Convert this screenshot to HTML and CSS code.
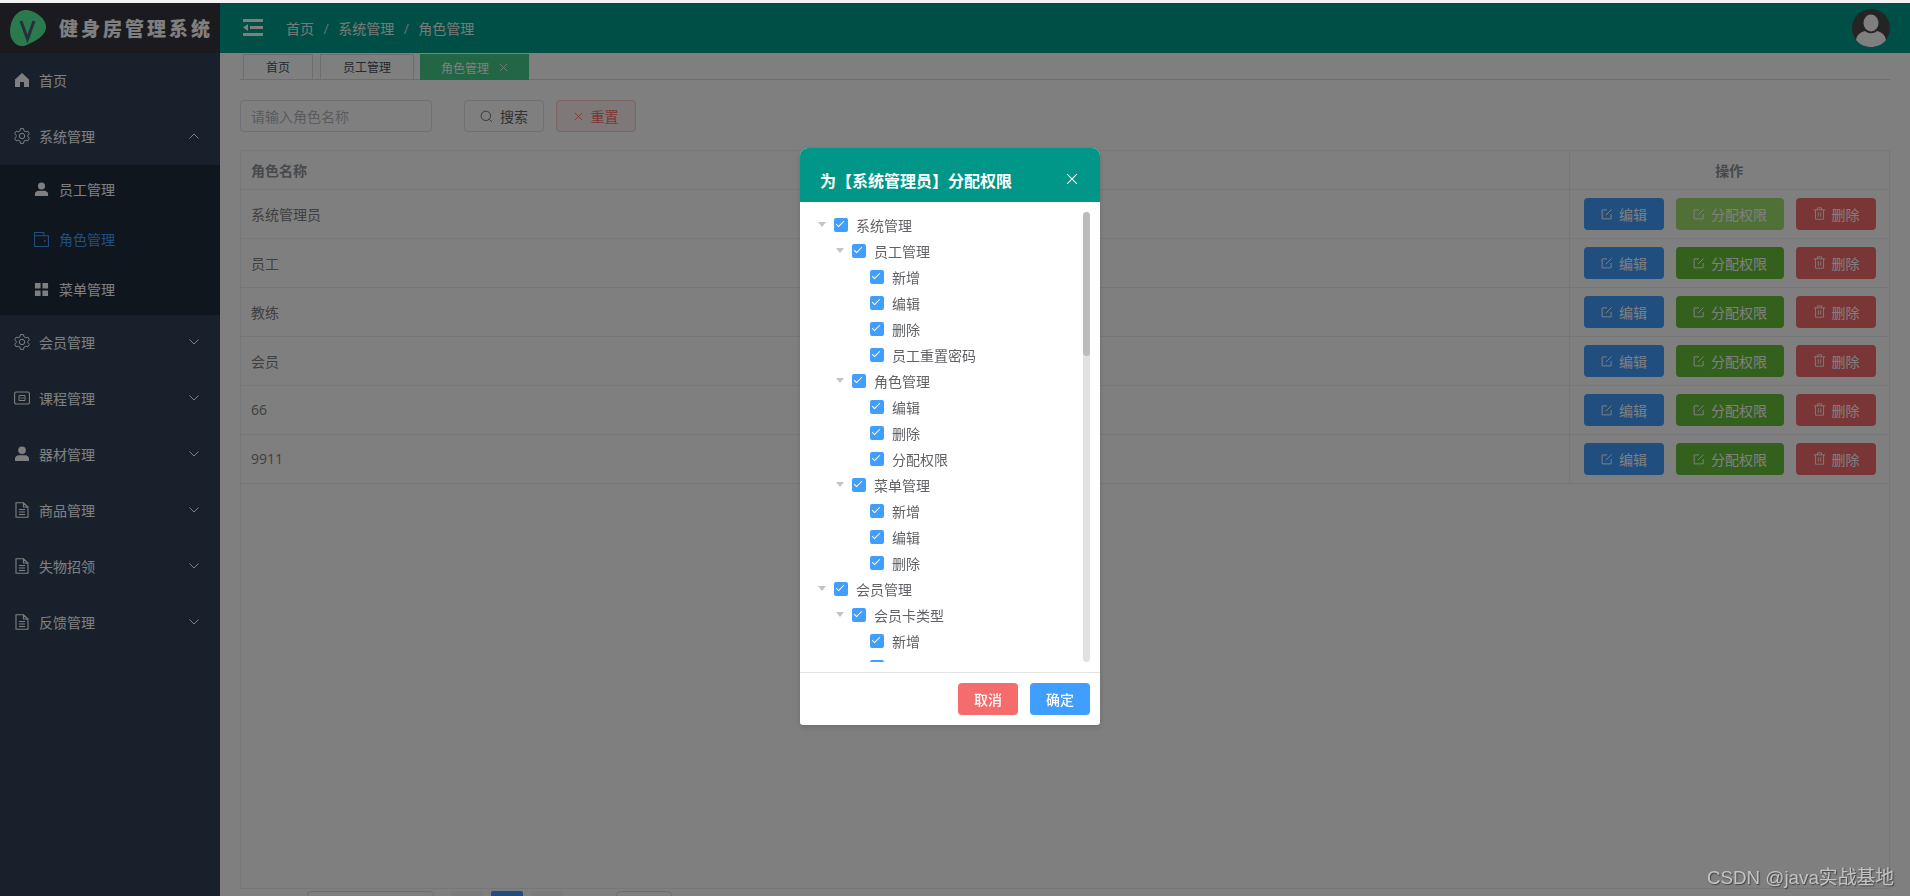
FILE: index.html
```html
<!DOCTYPE html>
<html lang="zh-CN">
<head>
    <meta charset="UTF-8">
    <meta name="viewport" content="width=device-width, initial-scale=1.0">
    <title>角色管理 - 健身房管理系统</title>
    <link rel="stylesheet" href="styles.css">
</head>
<body>
    <svg class="icon-defs" width="0" height="0">
        <symbol id="i-home" viewBox="0 0 16 16"><path d="M8 1 15 7.500V15H10V10H6V15H1V7.500Z" fill="currentColor"/></symbol>
        <symbol id="i-gear" viewBox="0 0 16 16"><path d="M6.500 .6H9.500L10 2.800 11.800 3.800 13.900 3.200 15.400 5.800 13.800 7.400V8.600L15.400 10.200 13.900 12.800 11.800 12.200 10 13.200 9.500 15.400H6.500L6 13.200 4.200 12.200 2.100 12.800 .6 10.200 2.200 8.600V7.400L.6 5.800 2.100 3.200 4.200 3.800 6 2.800Z" fill="none" stroke="currentColor" stroke-linejoin="round"/><circle cx="8" cy="8" r="2.700" fill="none" stroke="currentColor"/></symbol>
        <symbol id="i-user" viewBox="0 0 16 16"><circle cx="8" cy="4.200" r="3.800" fill="currentColor"/><path d="M1 15V12.500C1 10.500 3 9.400 5 9.200H11C13 9.400 15 10.500 15 12.500V15Z" fill="currentColor"/></symbol>
        <symbol id="i-wallet" viewBox="0 0 16 16"><path d="M.6 15.400V.6H10.500V4H15.400V15.400ZM.6 4H10.500" fill="none" stroke="currentColor" stroke-width="1.100"/><circle cx="11.500" cy="9.500" r="1" fill="currentColor"/></symbol>
        <symbol id="i-grid" viewBox="0 0 16 16"><path d="M1 1H7V7H1ZM9 1H15V7H9ZM1 9H7V15H1ZM9 9H15V15H9Z" fill="currentColor"/></symbol>
        <symbol id="i-film" viewBox="0 0 16 16"><rect x=".6" y="2" width="14.800" height="12" rx="1.500" fill="none" stroke="currentColor" stroke-width="1.100"/><path d="M5 5.500V10.500M11 5.500V10.500M5 5.500H11M5 10.500H11M7 7.200V8.800M9 7.200V8.800" fill="none" stroke="currentColor"/></symbol>
        <symbol id="i-doc" viewBox="0 0 16 16"><path d="M2 .8H9.500L14 5V15.200H2ZM9.500 .8V5H14M5 7.500H11M5 10H11M5 12.500H11" fill="none" stroke="currentColor" stroke-width="1.100"/></symbol>
        <symbol id="i-edit" viewBox="0 0 16 16"><path d="M13.500 8V14.500H1.500V2.500H8M6.500 9.500 14 2" fill="none" stroke="currentColor" stroke-width="1.300"/></symbol>
        <symbol id="i-trash" viewBox="0 0 16 16"><path d="M1 3.500H15M3 3.500V15H13V3.500M5.500 3.500V1H10.500V3.500M6.500 6.500V12M9.500 6.500V12" fill="none" stroke="currentColor" stroke-width="1.100"/></symbol>
        <symbol id="i-search" viewBox="0 0 16 16"><circle cx="7.200" cy="7.200" r="5.800" fill="none" stroke="currentColor" stroke-width="1.100"/><path d="M11.400 11.400 14.600 14.600" stroke="currentColor" stroke-width="1.100"/></symbol>
        <symbol id="i-close" viewBox="0 0 16 16"><path d="M1.500 1.500 14.500 14.500M14.500 1.500 1.500 14.500" stroke="currentColor" stroke-width="1.500"/></symbol>
        <symbol id="i-down" viewBox="0 0 10 6"><path d="M.5 .5 5 5 9.500 .5" fill="none" stroke="currentColor"/></symbol>
        <symbol id="i-up" viewBox="0 0 10 6"><path d="M.5 5.500 5 1 9.500 5.500" fill="none" stroke="currentColor"/></symbol>
    </svg>

    <div class="top-strip"></div>

    <div class="app">
        <aside class="sidebar">
            <div class="logo">
                <svg class="logo-mark" viewBox="0 0 36 36"><path d="M17 0C26 1 36 9 36 17 36 26 24 32 14 36 6 37 0 30 0 21 0 10 7-1 17 0Z" fill="#54f49c"/><path d="M11 11 17.500 29 24 11" fill="none" stroke="#4a6078" stroke-width="3"/></svg>
                <span class="logo-title">健身房管理系统</span>
            </div>
            <nav class="menu">
                <a class="menu-item"><svg class="menu-icon"><use href="#i-home"/></svg>首页</a>
                <a class="menu-item"><svg class="menu-icon"><use href="#i-gear"/></svg>系统管理<svg class="menu-arrow"><use href="#i-up"/></svg></a>
                <div class="submenu">
                    <a class="sub-item"><svg class="menu-icon"><use href="#i-user"/></svg>员工管理</a>
                    <a class="sub-item active"><svg class="menu-icon"><use href="#i-wallet"/></svg>角色管理</a>
                    <a class="sub-item"><svg class="menu-icon"><use href="#i-grid"/></svg>菜单管理</a>
                </div>
                <a class="menu-item"><svg class="menu-icon"><use href="#i-gear"/></svg>会员管理<svg class="menu-arrow"><use href="#i-down"/></svg></a>
                <a class="menu-item"><svg class="menu-icon"><use href="#i-film"/></svg>课程管理<svg class="menu-arrow"><use href="#i-down"/></svg></a>
                <a class="menu-item"><svg class="menu-icon"><use href="#i-user"/></svg>器材管理<svg class="menu-arrow"><use href="#i-down"/></svg></a>
                <a class="menu-item"><svg class="menu-icon"><use href="#i-doc"/></svg>商品管理<svg class="menu-arrow"><use href="#i-down"/></svg></a>
                <a class="menu-item"><svg class="menu-icon"><use href="#i-doc"/></svg>失物招领<svg class="menu-arrow"><use href="#i-down"/></svg></a>
                <a class="menu-item"><svg class="menu-icon"><use href="#i-doc"/></svg>反馈管理<svg class="menu-arrow"><use href="#i-down"/></svg></a>
            </nav>
        </aside>

        <div class="main">
            <header class="topbar">
                <svg class="hamburger" viewBox="0 0 20 17"><path d="M0 0H20V3H0ZM7 7H20V10H7ZM0 14H20V17H0ZM5 5V12L0 8.500Z" fill="currentColor"/></svg>
                <div class="breadcrumb">
                    <span>首页</span><i>/</i><span>系统管理</span><i>/</i><span>角色管理</span>
                </div>
                <svg class="avatar" viewBox="0 0 38 38"><circle cx="19" cy="19" r="19" fill="#484848"/><ellipse cx="19" cy="14" rx="7.500" ry="8.500" fill="#fff"/><path d="M4 31C5 25 9 23 13 22 16 25 22 25 25 22 29 23 33 25 34 31 30 36 24 38 19 38 14 38 8 36 4 31Z" fill="#fff"/></svg>
            </header>

            <div class="tabs">
                <span class="tab">首页</span>
                <span class="tab">员工管理</span>
                <span class="tab tab-active">角色管理<svg class="tab-close"><use href="#i-close"/></svg></span>
            </div>

            <div class="toolbar">
                <input class="search-input" type="text" placeholder="请输入角色名称">
                <button class="btn btn-plain"><svg class="btn-icon"><use href="#i-search"/></svg>搜索</button>
                <button class="btn btn-reset"><svg class="btn-icon"><use href="#i-close"/></svg>重置</button>
            </div>

            <div class="table-wrap">
                <table class="role-table">
                    <thead>
                        <tr><th>角色名称</th><th class="col-ops">操作</th></tr>
                    </thead>
                    <tbody>
                        <tr>
                            <td>系统管理员</td>
                            <td class="col-ops"><div class="ops">
                                <button class="btn btn-blue"><svg class="btn-icon"><use href="#i-edit"/></svg>编辑</button>
                                <button class="btn btn-green btn-hover"><svg class="btn-icon"><use href="#i-edit"/></svg>分配权限</button>
                                <button class="btn btn-red"><svg class="btn-icon"><use href="#i-trash"/></svg>删除</button>
                            </div></td>
                        </tr>
                        <tr>
                            <td>员工</td>
                            <td class="col-ops"><div class="ops">
                                <button class="btn btn-blue"><svg class="btn-icon"><use href="#i-edit"/></svg>编辑</button>
                                <button class="btn btn-green"><svg class="btn-icon"><use href="#i-edit"/></svg>分配权限</button>
                                <button class="btn btn-red"><svg class="btn-icon"><use href="#i-trash"/></svg>删除</button>
                            </div></td>
                        </tr>
                        <tr>
                            <td>教练</td>
                            <td class="col-ops"><div class="ops">
                                <button class="btn btn-blue"><svg class="btn-icon"><use href="#i-edit"/></svg>编辑</button>
                                <button class="btn btn-green"><svg class="btn-icon"><use href="#i-edit"/></svg>分配权限</button>
                                <button class="btn btn-red"><svg class="btn-icon"><use href="#i-trash"/></svg>删除</button>
                            </div></td>
                        </tr>
                        <tr>
                            <td>会员</td>
                            <td class="col-ops"><div class="ops">
                                <button class="btn btn-blue"><svg class="btn-icon"><use href="#i-edit"/></svg>编辑</button>
                                <button class="btn btn-green"><svg class="btn-icon"><use href="#i-edit"/></svg>分配权限</button>
                                <button class="btn btn-red"><svg class="btn-icon"><use href="#i-trash"/></svg>删除</button>
                            </div></td>
                        </tr>
                        <tr>
                            <td>66</td>
                            <td class="col-ops"><div class="ops">
                                <button class="btn btn-blue"><svg class="btn-icon"><use href="#i-edit"/></svg>编辑</button>
                                <button class="btn btn-green"><svg class="btn-icon"><use href="#i-edit"/></svg>分配权限</button>
                                <button class="btn btn-red"><svg class="btn-icon"><use href="#i-trash"/></svg>删除</button>
                            </div></td>
                        </tr>
                        <tr>
                            <td>9911</td>
                            <td class="col-ops"><div class="ops">
                                <button class="btn btn-blue"><svg class="btn-icon"><use href="#i-edit"/></svg>编辑</button>
                                <button class="btn btn-green"><svg class="btn-icon"><use href="#i-edit"/></svg>分配权限</button>
                                <button class="btn btn-red"><svg class="btn-icon"><use href="#i-trash"/></svg>删除</button>
                            </div></td>
                        </tr>
                    </tbody>
                </table>
            </div>

            <div class="pager">
                <span class="pager-select"></span>
                <span class="pager-btn"></span>
                <span class="pager-btn pager-current"></span>
                <span class="pager-btn"></span>
                <span class="pager-jump"></span>
            </div>
        </div>
    </div>

    <!-- dialog -->
    <div class="overlay">
        <div class="dialog">
            <div class="dialog-header">
                <span class="dialog-title">为【系统管理员】分配权限</span>
                <svg class="dialog-close"><use href="#i-close"/></svg>
            </div>
            <div class="dialog-body">
                <div class="tree">
                    <div class="node"><span class="caret"></span><span class="check"></span>系统管理</div>
                    <div class="node lv2"><span class="caret"></span><span class="check"></span>员工管理</div>
                    <div class="node lv3"><span class="caret none"></span><span class="check"></span>新增</div>
                    <div class="node lv3"><span class="caret none"></span><span class="check"></span>编辑</div>
                    <div class="node lv3"><span class="caret none"></span><span class="check"></span>删除</div>
                    <div class="node lv3"><span class="caret none"></span><span class="check"></span>员工重置密码</div>
                    <div class="node lv2"><span class="caret"></span><span class="check"></span>角色管理</div>
                    <div class="node lv3"><span class="caret none"></span><span class="check"></span>编辑</div>
                    <div class="node lv3"><span class="caret none"></span><span class="check"></span>删除</div>
                    <div class="node lv3"><span class="caret none"></span><span class="check"></span>分配权限</div>
                    <div class="node lv2"><span class="caret"></span><span class="check"></span>菜单管理</div>
                    <div class="node lv3"><span class="caret none"></span><span class="check"></span>新增</div>
                    <div class="node lv3"><span class="caret none"></span><span class="check"></span>编辑</div>
                    <div class="node lv3"><span class="caret none"></span><span class="check"></span>删除</div>
                    <div class="node"><span class="caret"></span><span class="check"></span>会员管理</div>
                    <div class="node lv2"><span class="caret"></span><span class="check"></span>会员卡类型</div>
                    <div class="node lv3"><span class="caret none"></span><span class="check"></span>新增</div>
                    <div class="node lv3"><span class="caret none"></span><span class="check"></span></div>
                </div>
                <div class="scrollbar"><div class="scroll-thumb"></div></div>
            </div>
            <div class="dialog-footer">
                <button class="btn btn-cancel">取消</button>
                <button class="btn btn-ok">确定</button>
            </div>
        </div>
    </div>

    <div class="watermark">CSDN @java实战基地</div>
</body>
</html>
```

FILE: styles.css
```css
/* Global Styles */
* {
    box-sizing: border-box;
    margin: 0;
    padding: 0;
}

html, body {
    height: 100%;
    overflow: hidden;
}

body {
    font-family: "Open Sans", "Noto Sans CJK SC", sans-serif;
    font-size: 14px;
    background-color: #fff;
    color: #606266;
}

.icon-defs {
    position: absolute;
}

.top-strip {
    height: 3px;
    background-color: #f2f2f2;
}

.app {
    display: flex;
    height: 893px;
}

/* Sidebar */
.sidebar {
    width: 220px;
    flex: none;
    background-color: #304156;
}

.logo {
    display: flex;
    align-items: center;
    height: 50px;
    padding-left: 10px;
    background-color: #34343f;
}

.logo-mark {
    width: 36px;
    height: 36px;
    flex: none;
}

.logo-title {
    margin-left: 13px;
    font-size: 19px;
    font-weight: 900;
    letter-spacing: 3px;
    white-space: nowrap;
    color: #fff;
}

.menu-item, .sub-item {
    display: flex;
    align-items: center;
    color: #fff;
}

.menu-item {
    height: 56px;
    padding: 0 0 2px 14px;
}

.menu-item .menu-icon {
    width: 16px;
    height: 16px;
    margin-right: 9px;
}

.menu-arrow {
    width: 10px;
    height: 6px;
    margin-left: auto;
    margin-right: 21px;
}

.submenu {
    background-color: #1f2d3d;
}

.sub-item {
    height: 50px;
    padding: 0 0 2px 34px;
}

.sub-item .menu-icon {
    width: 15px;
    height: 15px;
    margin-right: 10px;
}

.sub-item.active {
    color: #409eff;
}

/* Top bar */
.main {
    flex: 1;
    min-width: 0;
    overflow: hidden;
}

.topbar {
    display: flex;
    align-items: center;
    height: 50px;
    padding: 0 20px 0 23px;
    background-color: #009e8e;
    color: #fff;
}

.hamburger {
    width: 20px;
    height: 17px;
    margin-top: -1px;
}

.breadcrumb {
    display: flex;
    align-items: center;
    margin-left: 23px;
    color: #f0f0f0;
}

.breadcrumb i {
    margin: 0 9.5px;
    font-style: normal;
    color: #d8d8d8;
}

.avatar {
    width: 38px;
    height: 38px;
    margin-left: auto;
}

/* Tabs */
.tabs {
    display: flex;
    gap: 7px;
    height: 27px;
    margin: 0 20px;
    padding: 1px 0 0 3px;
    border-bottom: 1px solid #d8dce5;
}

.tab {
    display: flex;
    align-items: center;
    justify-content: center;
    height: 25px;
    padding: 0 22px;
    font-size: 12px;
    color: #495060;
    border: 1px solid #d8dce5;
    border-bottom: none;
}

.tab-active {
    margin-left: -1px;
    height: 26px;
    padding: 0 20px;
    color: #fff;
    background-color: #46cc8c;
    border-color: #46cc8c;
}

.tab-close {
    width: 9px;
    height: 9px;
    margin-left: 10px;
}

/* Toolbar */
.toolbar {
    display: flex;
    margin: 20px 20px 18px;
}

.search-input {
    width: 192px;
    height: 32px;
    padding: 0 10px;
    margin-right: 32px;
    font: inherit;
    border: 1px solid #dcdfe6;
    border-radius: 4px;
    outline: none;
}

.search-input::placeholder {
    color: #b4b6bb;
}

/* Buttons */
.btn {
    display: inline-flex;
    align-items: center;
    justify-content: center;
    height: 32px;
    font: inherit;
    color: #fff;
    border: 1px solid transparent;
    border-radius: 4px;
    cursor: pointer;
}

.btn-icon {
    width: 12px;
    height: 12px;
    margin-right: 6px;
}

.btn-plain, .btn-reset {
    width: 80px;
}

.btn-plain {
    margin-right: 12px;
    color: #606266;
    background-color: #fff;
    border-color: #dcdfe6;
}

.btn-plain .btn-icon {
    width: 13px;
    height: 13px;
    margin-right: 7px;
}

.btn-reset {
    color: #f56c6c;
    background-color: #fef0f0;
    border-color: #fbc4c4;
}

.btn-reset .btn-icon {
    width: 9px;
    height: 9px;
    margin-right: 8px;
}

.btn-blue, .btn-red {
    width: 80px;
}

.btn-red .btn-icon {
    width: 13px;
    height: 13px;
}

.btn-green {
    width: 108px;
    background-color: #67c23a;
}

.btn-blue {
    background-color: #409eff;
}

.btn-red {
    background-color: #f56c6c;
}

.btn-hover {
    background-color: #a0e070;
}

/* Table */
.table-wrap {
    height: 739px;
    margin: 0 20px;
    border: 1px solid #ebeef5;
}

.role-table {
    width: 100%;
    border-collapse: collapse;
    table-layout: fixed;
}

.role-table th {
    height: 38px;
    padding: 0 10px;
    text-align: left;
    font-weight: 700;
    color: #909399;
    border-bottom: 1px solid #ebeef5;
}

.role-table td {
    height: 49px;
    padding: 0 10px;
    color: #808080;
    border-bottom: 1px solid #ebeef5;
}

.role-table .col-ops {
    width: 320px;
    text-align: center;
    border-left: 1px solid #ebeef5;
}

.ops {
    display: flex;
    justify-content: flex-end;
    gap: 12px;
    padding-right: 3px;
}

/* Pagination, cut off by the window */
.pager {
    display: flex;
    gap: 8px;
    height: 32px;
    margin-top: 2px;
    padding-left: 87px;
}

.pager-select {
    width: 127px;
    margin-right: 9px;
    border: 1px solid #dcdfe6;
    border-radius: 4px;
}

.pager-btn {
    width: 32px;
    background-color: #f4f4f5;
    border-radius: 2px;
}

.pager-current {
    background-color: #409eff;
}

.pager-jump {
    width: 56px;
    margin-left: 45px;
    border: 1px solid #dcdfe6;
    border-radius: 4px;
}

/* Dialog */
.overlay {
    position: fixed;
    top: 3px;
    left: 0;
    right: 0;
    bottom: 0;
    display: flex;
    justify-content: center;
    align-items: flex-start;
    padding: 145px 10px 0 0;
    background-color: rgba(0, 0, 0, 0.5);
}

.dialog {
    width: 300px;
    background-color: #fff;
    border-radius: 8px 8px 3px 3px;
    box-shadow: 0 2px 6px rgba(0, 0, 0, 0.15);
    overflow: hidden;
}

.dialog-header {
    display: flex;
    align-items: center;
    justify-content: space-between;
    height: 54px;
    padding: 9px 22px 0 20px;
    color: #fff;
    background-color: #009688;
}

.dialog-title {
    font-size: 16px;
    font-weight: 700;
}

.dialog-close {
    width: 12px;
    height: 12px;
    margin-top: -1px;
}

.dialog-body {
    position: relative;
    height: 470px;
    padding: 10px;
}

.tree {
    height: 450px;
    overflow: hidden;
}

.scrollbar {
    position: absolute;
    top: 10px;
    right: 10px;
    width: 7px;
    height: 450px;
    background-color: #e1e1e1;
    border-radius: 4px;
}

.scroll-thumb {
    height: 144px;
    background-color: #bcbcbc;
    border-radius: 4px;
}

.node {
    display: flex;
    align-items: center;
    height: 26px;
    white-space: nowrap;
}

.lv2 {
    padding-left: 18px;
}

.lv3 {
    padding-left: 36px;
}

.caret {
    position: relative;
    width: 24px;
    height: 12px;
    flex: none;
}

.caret::before {
    content: "";
    position: absolute;
    left: 8px;
    top: 3px;
    border-left: 4px solid transparent;
    border-right: 4px solid transparent;
    border-top: 5px solid #c0c4cc;
}

.caret.none::before {
    display: none;
}

.check {
    position: relative;
    width: 14px;
    height: 14px;
    flex: none;
    margin-right: 8px;
    background-color: #409eff;
    border-radius: 2px;
}

.check::after {
    content: "";
    position: absolute;
    left: 4px;
    top: 1px;
    width: 3px;
    height: 7px;
    border: 1px solid #fff;
    border-top: none;
    border-left: none;
    transform: rotate(45deg);
}

.dialog-footer {
    display: flex;
    justify-content: flex-end;
    gap: 12px;
    padding: 10px;
    border-top: 1px solid #e5e5e5;
}

.btn-cancel, .btn-ok {
    width: 60px;
    font-weight: 500;
}

.btn-cancel {
    background-color: #f56c6c;
}

.btn-ok {
    background-color: #409eff;
}

/* Watermark */
.watermark {
    position: fixed;
    right: 16px;
    bottom: 7px;
    font-family: "Liberation Sans", "Noto Sans CJK SC", sans-serif;
    font-size: 18.8px;
    color: #c4c4c4;
    text-shadow: 1px 1px 1px #444;
}
```
